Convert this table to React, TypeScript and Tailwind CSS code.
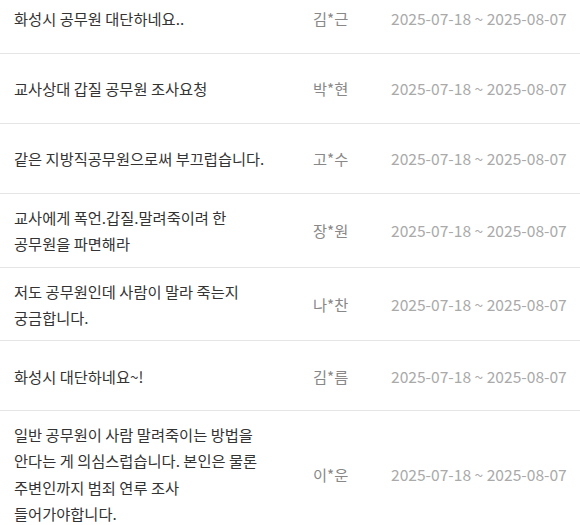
import React from "react";

const rows = [
  { title: ["화성시 공무원 대단하네요.."], name: "김*근" },
  { title: ["교사상대 갑질 공무원 조사요청"], name: "박*현" },
  { title: ["같은 지방직공무원으로써 부끄럽습니다."], name: "고*수" },
  { title: ["교사에게 폭언.갑질.말려죽이려 한", "공무원을 파면해라"], name: "장*원" },
  { title: ["저도 공무원인데 사람이 말라 죽는지", "궁금합니다."], name: "나*찬" },
  { title: ["화성시 대단하네요~!"], name: "김*름" },
  {
    title: ["일반 공무원이 사람 말려죽이는 방법을", "안다는 게 의심스럽습니다. 본인은 물론", "주변인까지 범죄 연루 조사", "들어가야합니다."],
    name: "이*운",
  },
];

export default function App() {
  return (
    <div
      className="w-[580px] h-[525px] overflow-hidden bg-white"
      style={{ fontFamily: '"Noto Sans CJK KR", "Noto Sans", sans-serif' }}
    >
      <div className="-mt-[16px]">
        {rows.map((r, i) => (
          <div
            key={i}
            className="flex items-center min-h-[70px] py-[10px] border-b border-[#e5e5e5] leading-[26.3px]"
          >
            <div className="w-[313px] pl-[14px] text-[#333] text-[15.3px]">
              {r.title.map((t, j) => (
                <div key={j}>{t}</div>
              ))}
            </div>
            <div className="w-[78px] text-[#888] text-[15.3px]">{r.name}</div>
            <div className="text-[#aaa] text-[15.6px]">2025-07-18 ~ 2025-08-07</div>
          </div>
        ))}
      </div>
    </div>
  );
}
